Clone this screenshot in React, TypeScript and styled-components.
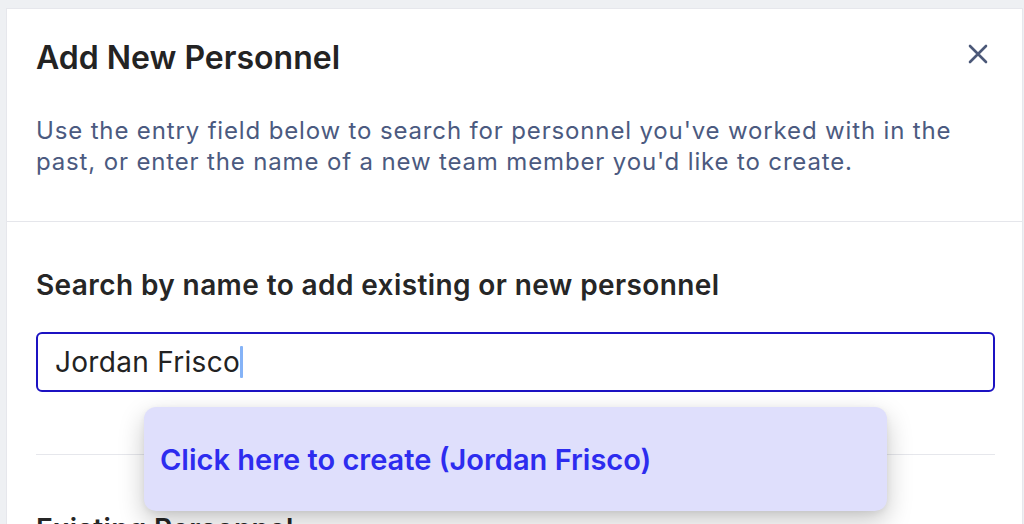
import styled, { createGlobalStyle } from "styled-components";

/***** Global ******/
const GlobalStyle = createGlobalStyle`
  * {
    box-sizing: border-box;
  }
  body {
    margin: 0;
    background: #eef0f3;
    font-family: Inter, "Noto Sans", "Liberation Sans", sans-serif;
    overflow: hidden;
  }
`;

/***** Styled ******/
const Backdrop = styled.div`
  height: 524px;
  padding: 8px 1px 0 6px;
  overflow: hidden;
`;
const Panel = styled.section`
  background: #ffffff;
  border: 1px solid #e6e7ec;
  border-bottom: none;
  height: 100%;
`;
const Header = styled.header`
  padding: 30px 28px 44px 29px;
  border-bottom: 1px solid #e5e6eb;
`;
const TitleRow = styled.div`
  display: flex;
  justify-content: space-between;
  align-items: flex-start;
`;
const Title = styled.h1`
  margin: 0;
  font-size: 32px;
  line-height: 38px;
  font-weight: 600;
  color: #232323;
`;
const CloseButton = styled.button`
  display: flex;
  align-items: center;
  justify-content: center;
  width: 30px;
  height: 30px;
  margin: 0 1px 0 0;
  padding: 0;
  border: none;
  background: none;
  color: #4b5878;
  cursor: pointer;
`;
const Description = styled.p`
  margin: 38px 0 0 0;
  font-size: 24px;
  line-height: 31px;
  letter-spacing: 0.85px;
  color: #4b5a80;
  max-width: 940px;
`;
const Body = styled.div`
  padding: 46px 27px 0 29px;
`;
const Label = styled.label`
  display: block;
  font-size: 28px;
  line-height: 34px;
  font-weight: 600;
  letter-spacing: 0.4px;
  color: #262626;
`;
const Field = styled.div`
  position: relative;
  margin-top: 30px;
`;
const InputBox = styled.div`
  display: flex;
  align-items: center;
  height: 60px;
  padding: 0 17px;
  border: 2px solid #1c12c2;
  border-radius: 6px;
  background: #ffffff;
  font-size: 28px;
  letter-spacing: 0.3px;
  color: #222222;
  cursor: text;
`;
const Caret = styled.span`
  display: inline-block;
  width: 3px;
  height: 32px;
  border-radius: 1px;
  background: #85b3f7;
`;
const Suggestion = styled.button`
  position: absolute;
  top: 75px;
  left: 108px;
  width: 743px;
  height: 104px;
  display: flex;
  align-items: center;
  padding: 0 16px;
  border: none;
  border-radius: 12px;
  background: #dfdffc;
  box-shadow: 0 10px 26px rgba(0, 0, 0, 0.22), 0 2px 6px rgba(0, 0, 0, 0.06);
  font-family: inherit;
  font-size: 29px;
  font-weight: 600;
  color: #2d2cef;
  text-align: left;
  cursor: pointer;
  z-index: 2;
`;
const Divider = styled.hr`
  margin: 62px 0 57px 0;
  border: none;
  border-top: 1px solid #e6e7ec;
`;

function Personnel() {
  const name = "Jordan Frisco";

  return (
    <Backdrop>
      <Panel>
        <Header>
          <TitleRow>
            <Title>Add New Personnel</Title>
            <CloseButton aria-label="Close">
              <svg width="20" height="20" viewBox="0 0 20 20" fill="none">
                <path
                  d="M2 2L18 18M18 2L2 18"
                  stroke="currentColor"
                  strokeWidth="2.6"
                  strokeLinecap="round"
                />
              </svg>
            </CloseButton>
          </TitleRow>
          <Description>
            Use the entry field below to search for personnel you've worked
            with in the past, or enter the name of a new team member you'd like
            to create.
          </Description>
        </Header>

        <Body>
          <Label htmlFor="personnel-search">
            Search by name to add existing or new personnel
          </Label>
          <Field>
            <InputBox id="personnel-search" role="textbox">
              {name}
              <Caret />
            </InputBox>
            <Suggestion>Click here to create ({name})</Suggestion>
          </Field>
          <Divider />
          <Label>Existing Personnel</Label>
        </Body>
      </Panel>
    </Backdrop>
  );
}

export default function App() {
  return (
    <>
      <GlobalStyle />
      <Personnel />
    </>
  );
}
